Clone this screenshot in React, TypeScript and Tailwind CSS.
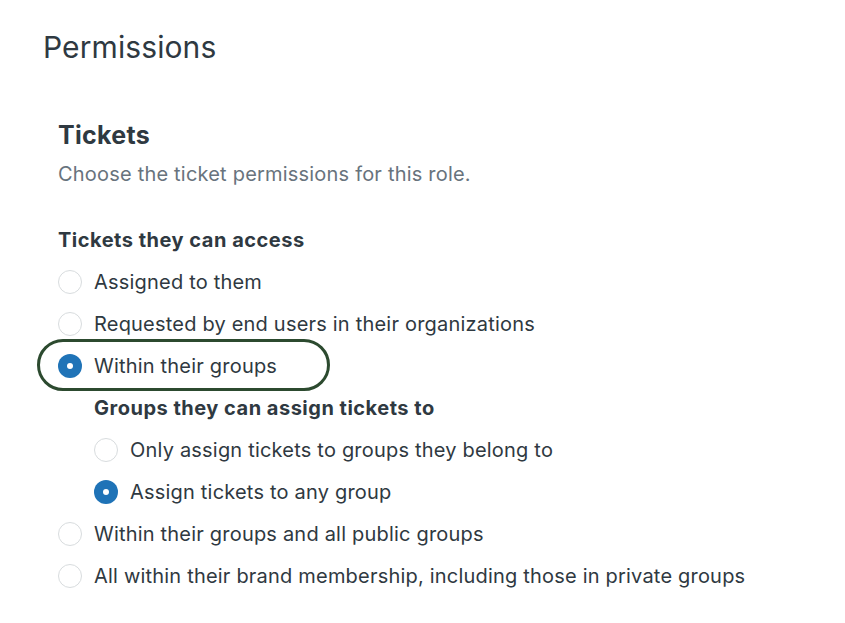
import React from "react";

function Radio({ checked }: { checked?: boolean }) {
  return checked ? (
    <span className="flex h-[24px] w-[24px] shrink-0 items-center justify-center rounded-full bg-[#1f73b7]">
      <span className="h-[6px] w-[6px] rounded-full bg-white" />
    </span>
  ) : (
    <span className="h-[24px] w-[24px] shrink-0 rounded-full border border-[#d8dcde] bg-white" />
  );
}

function Option({ label, checked }: { label: string; checked?: boolean }) {
  return (
    <div className="flex h-[42px] items-center gap-[12px]">
      <Radio checked={checked} />
      <span className="text-[20px] tracking-[0.2px] text-[#2f3941]">{label}</span>
    </div>
  );
}

export default function App() {
  return (
    <div
      className="h-[623px] w-[845px] bg-white"
      style={{ fontFamily: "Inter, 'Noto Sans', sans-serif" }}
    >
      <div className="pl-[43px] pt-[27px]">
        <h1 className="text-[30px] leading-[40px] font-normal tracking-[0.1px] text-[#2f3941]">Permissions</h1>
      </div>
      <div className="pl-[58px] pt-[52px]">
        <h2 className="text-[25px] leading-[32px] font-bold tracking-[0.3px] text-[#2f3941]">Tickets</h2>
        <p className="mt-[9px] text-[20px] leading-[28px] tracking-[0.2px] text-[#68737d]">
          Choose the ticket permissions for this role.
        </p>
        <div className="mt-[38px] text-[20px] leading-[28px] font-bold tracking-[0.5px] text-[#2f3941]">
          Tickets they can access
        </div>
        <div className="mt-[7px] flex flex-col">
          <Option label="Assigned to them" />
          <Option label="Requested by end users in their organizations" />
          <div className="relative">
            <div className="pointer-events-none absolute left-[-21px] top-[-6px] h-[52px] w-[293px] rounded-full border-[3.5px] border-[#2c4a2f]" />
            <Option label="Within their groups" checked />
          </div>
          <div className="pl-[36px]">
            <div className="flex h-[42px] items-center text-[20px] font-bold tracking-[0.5px] text-[#2f3941]">
              Groups they can assign tickets to
            </div>
            <Option label="Only assign tickets to groups they belong to" />
            <Option label="Assign tickets to any group" checked />
          </div>
          <Option label="Within their groups and all public groups" />
          <Option label="All within their brand membership, including those in private groups" />
        </div>
      </div>
    </div>
  );
}
